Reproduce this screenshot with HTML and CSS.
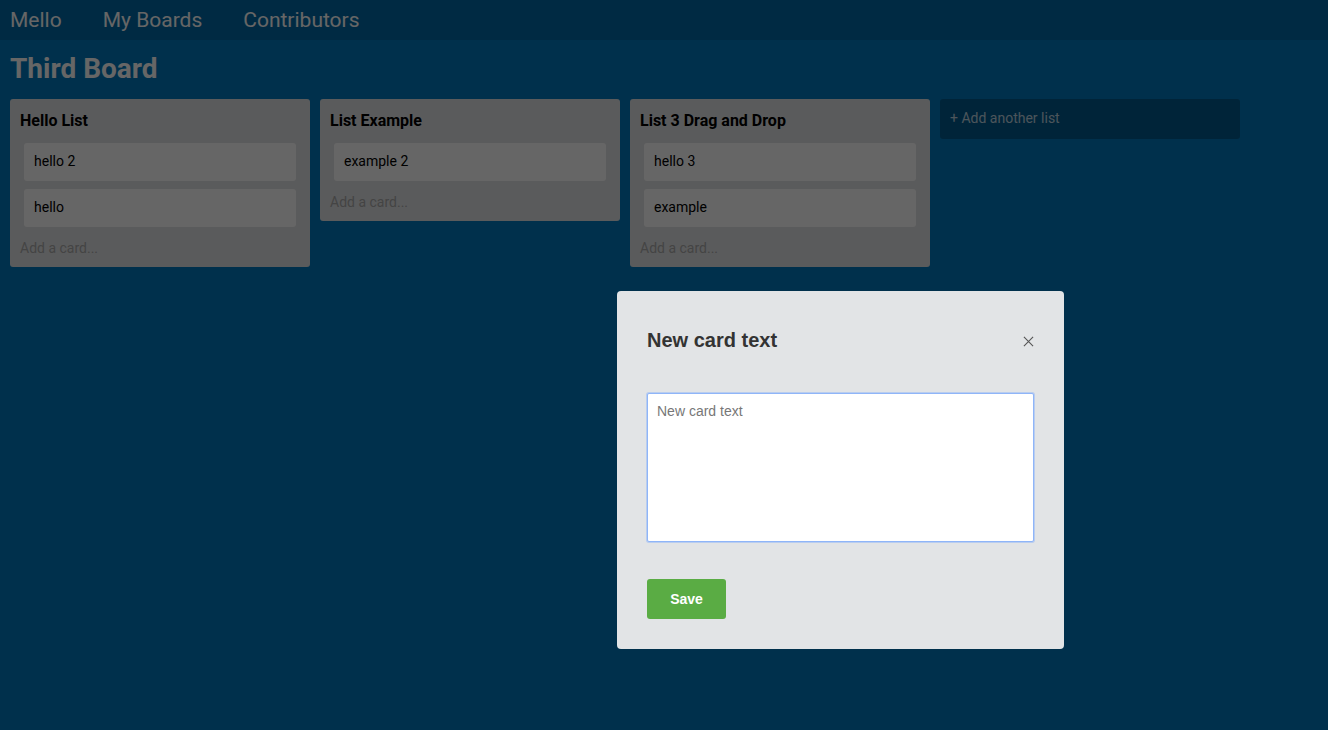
FILE: index.html
```html
<!DOCTYPE html>
<html>
<head>
<meta charset="utf-8">
<link rel="stylesheet" href="styles.css">
</head>
<body>
<nav class="nav">
  <a class="nav-link">Mello</a>
  <a class="nav-link">My Boards</a>
  <a class="nav-link">Contributors</a>
</nav>
<main class="board">
  <h1 class="board-title">Third Board</h1>
  <div class="lists">
    <section class="list">
      <h2 class="list-title">Hello List</h2>
      <div class="card">hello 2</div>
      <div class="card">hello</div>
      <div class="add-card">Add a card...</div>
    </section>
    <section class="list">
      <h2 class="list-title">List Example</h2>
      <div class="card">example 2</div>
      <div class="add-card">Add a card...</div>
    </section>
    <section class="list">
      <h2 class="list-title">List 3 Drag and Drop</h2>
      <div class="card">hello 3</div>
      <div class="card">example</div>
      <div class="add-card">Add a card...</div>
    </section>
    <div class="add-list">+ Add another list</div>
  </div>
</main>
<div class="overlay">
  <div class="modal">
    <div class="modal-head">
      <h3 class="modal-title">New card text</h3>
      <svg class="close" width="12" height="12" viewBox="0 0 12 12"><path d="M1 1L11 11M11 1L1 11" stroke="#555" stroke-width="1.2" fill="none"/></svg>
    </div>
    <textarea class="input" placeholder="New card text"></textarea>
    <button class="save">Save</button>
  </div>
</div>
</body>
</html>
```
FILE: styles.css
```css
* { box-sizing: border-box; }
html, body { margin: 0; height: 100%; }
body {
  background: #0079bf;
  font-family: Roboto, "Liberation Sans", sans-serif;
  overflow: hidden;
}
.nav {
  height: 40px;
  background: #026aa7;
  display: flex;
  align-items: center;
  gap: 41px;
  padding: 0 10px;
}
.nav-link {
  color: #fff;
  font-size: 21px;
  line-height: 40px;
}
.board { padding: 0 10px; }
.board-title {
  margin: 0;
  color: #fff;
  font-size: 28px;
  font-weight: 700;
  line-height: 40px;
  padding-top: 9px;
  height: 59px;
}
.lists {
  display: flex;
  align-items: flex-start;
  gap: 10px;
}
.list {
  width: 300px;
  background: #e2e4e6;
  border-radius: 3px;
  padding: 11px 10px 9px;
  display: flex;
  flex-direction: column;
}
.list-title {
  margin: 0 0 11px;
  font-size: 16px;
  font-weight: 700;
  line-height: 22px;
  color: #000;
}
.card {
  margin: 0 4px 8px;
  height: 38px;
  background: #fff;
  border-radius: 3px;
  padding: 0 10px;
  font-size: 14px;
  line-height: 36px;
  color: #000;
}
.add-card {
  margin-top: 3px;
  font-size: 14px;
  line-height: 20px;
  color: #aaa;
}
.add-list {
  width: 300px;
  height: 40px;
  background: rgba(0,0,0,0.25);
  border-radius: 3px;
  padding: 0 10px;
  line-height: 38px;
  font-size: 14px;
  color: rgba(255,255,255,0.75);
}
.overlay {
  position: fixed;
  inset: 0;
  background: rgba(0,0,0,0.6);
}
.modal {
  position: absolute;
  left: 617px;
  top: 291px;
  width: 447px;
  height: 358px;
  background: #e2e4e6;
  border-radius: 4px;
  padding: 30px 30px 30px;
  font-family: "Liberation Sans", Arial, sans-serif;
}
.modal-head {
  display: flex;
  align-items: center;
  justify-content: space-between;
  height: 38px;
}
.modal-title {
  margin: 0;
  font-size: 20px;
  font-weight: 700;
  color: #333;
}
.close { width: 11px; height: 11px; margin-top: 2px; }
.input {
  display: block;
  margin-top: 34px;
  width: 387px;
  height: 149px;
  border: 1px solid #8fb5f8;
  box-shadow: 0 0 0 1px rgba(143,181,248,0.5);
  border-radius: 2px;
  padding: 9px 9px;
  font-family: "Liberation Sans", Arial, sans-serif;
  font-size: 14px;
  resize: none;
  outline: none;
}
.input::placeholder { color: #777; }
.save {
  display: block;
  margin-top: 37px;
  width: 79px;
  height: 40px;
  background: #5aac44;
  border: none;
  border-radius: 3px;
  color: #fff;
  font-family: "Liberation Sans", Arial, sans-serif;
  font-size: 14px;
  font-weight: 700;
}
```
